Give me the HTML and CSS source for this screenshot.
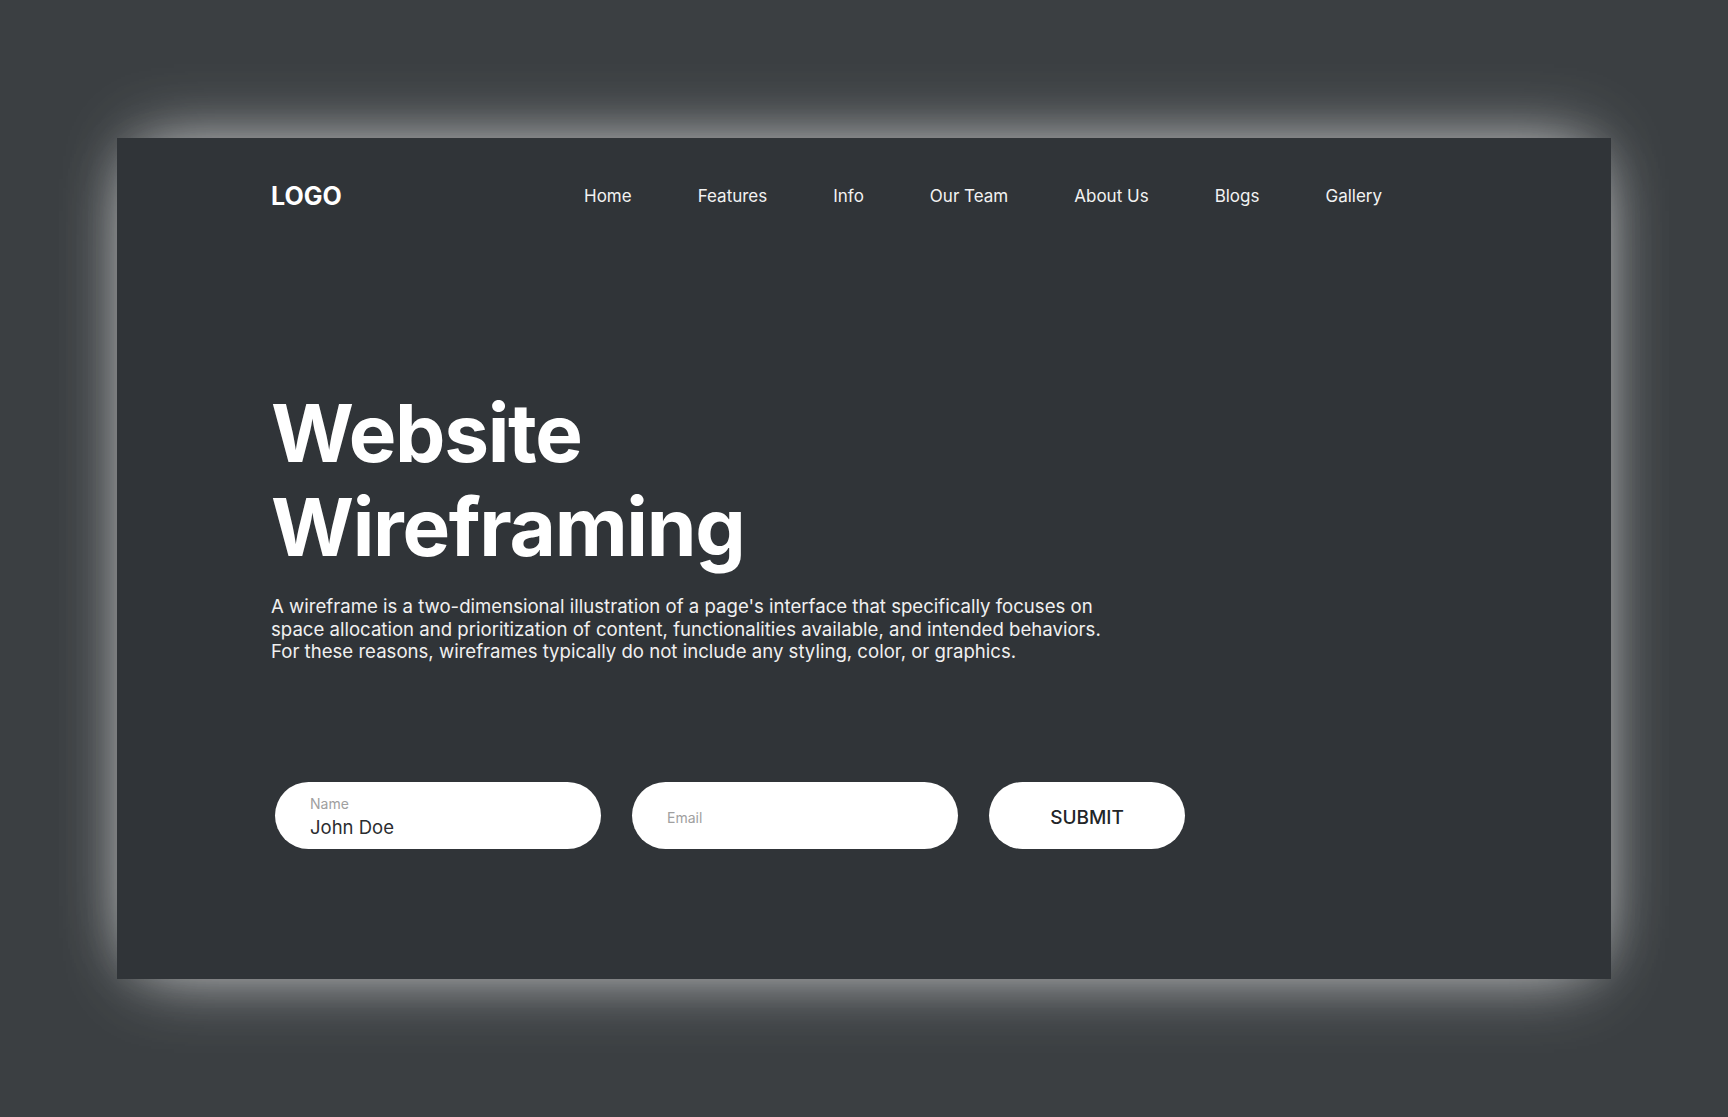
FILE: index.html
```html
<!DOCTYPE html>
<html lang="en">
<head>
<meta charset="utf-8">
<title>Website Wireframing</title>
<link rel="stylesheet" href="styles.css">
</head>
<body>
<main class="card">
  <header class="header">
    <div class="logo">LOGO</div>
    <nav class="nav">
      <a class="nav-link" href="#">Home</a>
      <a class="nav-link" href="#">Features</a>
      <a class="nav-link" href="#">Info</a>
      <a class="nav-link" href="#">Our Team</a>
      <a class="nav-link" href="#">About Us</a>
      <a class="nav-link" href="#">Blogs</a>
      <a class="nav-link" href="#">Gallery</a>
    </nav>
  </header>
  <section class="hero">
    <h1 class="title">Website<br>Wireframing</h1>
    <p class="lead">A wireframe is a two-dimensional illustration of a page's interface that specifically focuses on space allocation and prioritization of content, functionalities available, and intended behaviors. For these reasons, wireframes typically do not include any styling, color, or graphics.</p>
  </section>
  <form class="form">
    <label class="field">
      <span class="field-label">Name</span>
      <input class="field-input" type="text" value="John Doe">
    </label>
    <label class="field">
      <input class="field-input field-input--email" type="email" placeholder="Email">
    </label>
    <button class="submit" type="button">SUBMIT</button>
  </form>
</main>
</body>
</html>
```

FILE: styles.css
```css
* { box-sizing: border-box; }

html, body {
  margin: 0;
  padding: 0;
}

body {
  background: #3b3f42;
  font-family: Inter, "Noto Sans", "Liberation Sans", sans-serif;
  width: 1728px;
  height: 1117px;
  overflow: hidden;
  padding: 138px 0 0 117px;
}

.card {
  width: 1494px;
  height: 841px;
  background: #303438;
  padding: 46px 0 0 154px;
  display: flex;
  flex-direction: column;
  box-shadow:
    0 -16px 70px -22px rgba(255, 255, 255, 0.6),
    0 16px 70px -22px rgba(255, 255, 255, 0.6),
    0 0 50px -16px rgba(255, 255, 255, 0.2);
}

.header {
  display: flex;
  align-items: center;
  height: 24px;
}

.logo {
  flex: 0 0 313px;
  color: #ffffff;
  font-weight: 700;
  font-size: 25px;
  line-height: 24px;
}

.nav {
  display: flex;
  gap: 66px;
}

.nav-link {
  color: #f2f2f2;
  text-decoration: none;
  font-size: 17px;
  line-height: 24px;
}

.hero {
  margin-top: 178px;
}

.title {
  margin: 0;
  color: #ffffff;
  font-size: 80px;
  line-height: 94px;
  font-weight: 700;
  letter-spacing: -1.3px;
}

.lead {
  margin: 21px 0 0;
  max-width: 845px;
  color: #f0f0f0;
  font-size: 18.6px;
  line-height: 22.6px;
}

.form {
  margin: 119px 0 0 4px;
  display: flex;
  gap: 31px;
}

.field {
  width: 326px;
  height: 67px;
  background: #ffffff;
  border-radius: 34px;
  padding: 0 30px 0 35px;
  display: flex;
  flex-direction: column;
  justify-content: center;
}

.field-label {
  color: #a0a0a0;
  font-size: 14px;
  line-height: 16px;
  margin-top: 4px;
  margin-bottom: 4px;
}

.field-input {
  border: 0;
  outline: none;
  padding: 0;
  margin: 0;
  background: transparent;
  font-family: inherit;
  font-size: 18.5px;
  line-height: 22px;
  height: 22px;
  color: #2b2d30;
  width: 100%;
}

.field-input--email {
  font-size: 14px;
  margin-top: 5px;
}

.field-input--email::placeholder {
  color: #a0a0a0;
}

.submit {
  width: 196px;
  height: 67px;
  border: 0;
  border-radius: 34px;
  background: #ffffff;
  color: #232528;
  font-family: inherit;
  font-size: 19px;
  font-weight: 500;
  padding: 4px 0 0;
  cursor: pointer;
}
```
